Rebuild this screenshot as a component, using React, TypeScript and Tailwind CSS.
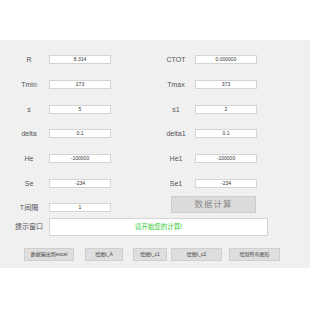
import { FC } from "react";

const font = { fontFamily: '"Liberation Sans", "Noto Sans CJK SC", sans-serif' };

type Pair = { label: string; value: string };

const left: Pair[] = [
  { label: "R", value: "8.314" },
  { label: "Tmin", value: "273" },
  { label: "s", value: "5" },
  { label: "delta", value: "0.1" },
  { label: "He", value: "-100000" },
  { label: "Se", value: "-234" },
];

const right: Pair[] = [
  { label: "CTOT", value: "0.000000" },
  { label: "Tmax", value: "373" },
  { label: "s1", value: "2" },
  { label: "delta1", value: "0.1" },
  { label: "He1", value: "-100000" },
  { label: "Se1", value: "-234" },
];

const Field: FC<{ value: string; className?: string }> = ({ value, className }) => (
  <div
    className={`w-[62px] h-[9px] bg-white border border-[#d4d4d4] flex items-center justify-center text-[5px] leading-none text-[#333] ${className ?? ""}`}
  >
    {value}
  </div>
);

const bottomButtons = [
  { text: "数据输出到excel", w: "w-[50px]", ml: "ml-[24px]" },
  { text: "绘图t_A", w: "w-[38px]", ml: "ml-[11px]" },
  { text: "绘图t_c1", w: "w-[34px]", ml: "ml-[10px]" },
  { text: "绘图t_c2", w: "w-[51px]", ml: "ml-[4px]" },
  { text: "绘制所有图形", w: "w-[51px]", ml: "ml-[7px]" },
];

const App: FC = () => {
  return (
    <div className="w-[310px] h-[310px] bg-white pt-[40px]" style={font}>
      <div className="h-[228px] bg-[#f0f0f0] pt-[7.67px]">
        {left.map((l, i) => (
          <div key={l.label} className="flex items-center h-[24.67px]">
            <div className="w-[155px] flex items-center">
              <span className="ml-[12px] w-[34px] text-center text-[7px] leading-none text-[#555]">
                {l.label}
              </span>
              <Field value={l.value} className="ml-[3px]" />
            </div>
            <div className="flex items-center">
              <span className="ml-[5px] w-[32px] text-center text-[7px] leading-none text-[#555]">
                {right[i].label}
              </span>
              <Field value={right[i].value} className="ml-[3px]" />
            </div>
          </div>
        ))}

        {/* last row: T间隔 + 数据计算 */}
        <div className="flex items-start h-[21px]">
          <div className="w-[155px] flex items-center mt-[7px]">
            <span className="ml-[12px] w-[34px] text-center text-[7px] leading-none text-[#555]">
              T间隔
            </span>
            <Field value="1" className="ml-[3px] h-[8px]" />
          </div>
          <button className="ml-[16px] mt-[0.33px] w-[85px] h-[17px] bg-[#dcdcdc] border border-[#cccccc] text-[8.5px] tracking-[1px] text-[#8a8a8a] flex items-center justify-center">
            数据计算
          </button>
        </div>

        <div className="flex items-center mt-[1.33px] h-[18px]">
          <span className="ml-[12px] w-[34px] text-center text-[7px] leading-none text-[#555]">
            提示窗口
          </span>
          <div className="ml-[3px] w-[219px] h-[18px] bg-white border border-[#d4d4d4] flex items-center justify-center text-[6.5px] text-[#33cc33]">
            请开始您的计算!
          </div>
        </div>

        <div className="flex items-center mt-[12px] h-[13px]">
          {bottomButtons.map((b) => (
            <button
              key={b.text}
              className={`${b.w} ${b.ml} h-[13px] bg-[#dedede] border border-[#cfcfcf] text-[5px] leading-none text-[#444] flex items-center justify-center whitespace-nowrap`}
            >
              {b.text}
            </button>
          ))}
        </div>
      </div>
    </div>
  );
};

export default App;
